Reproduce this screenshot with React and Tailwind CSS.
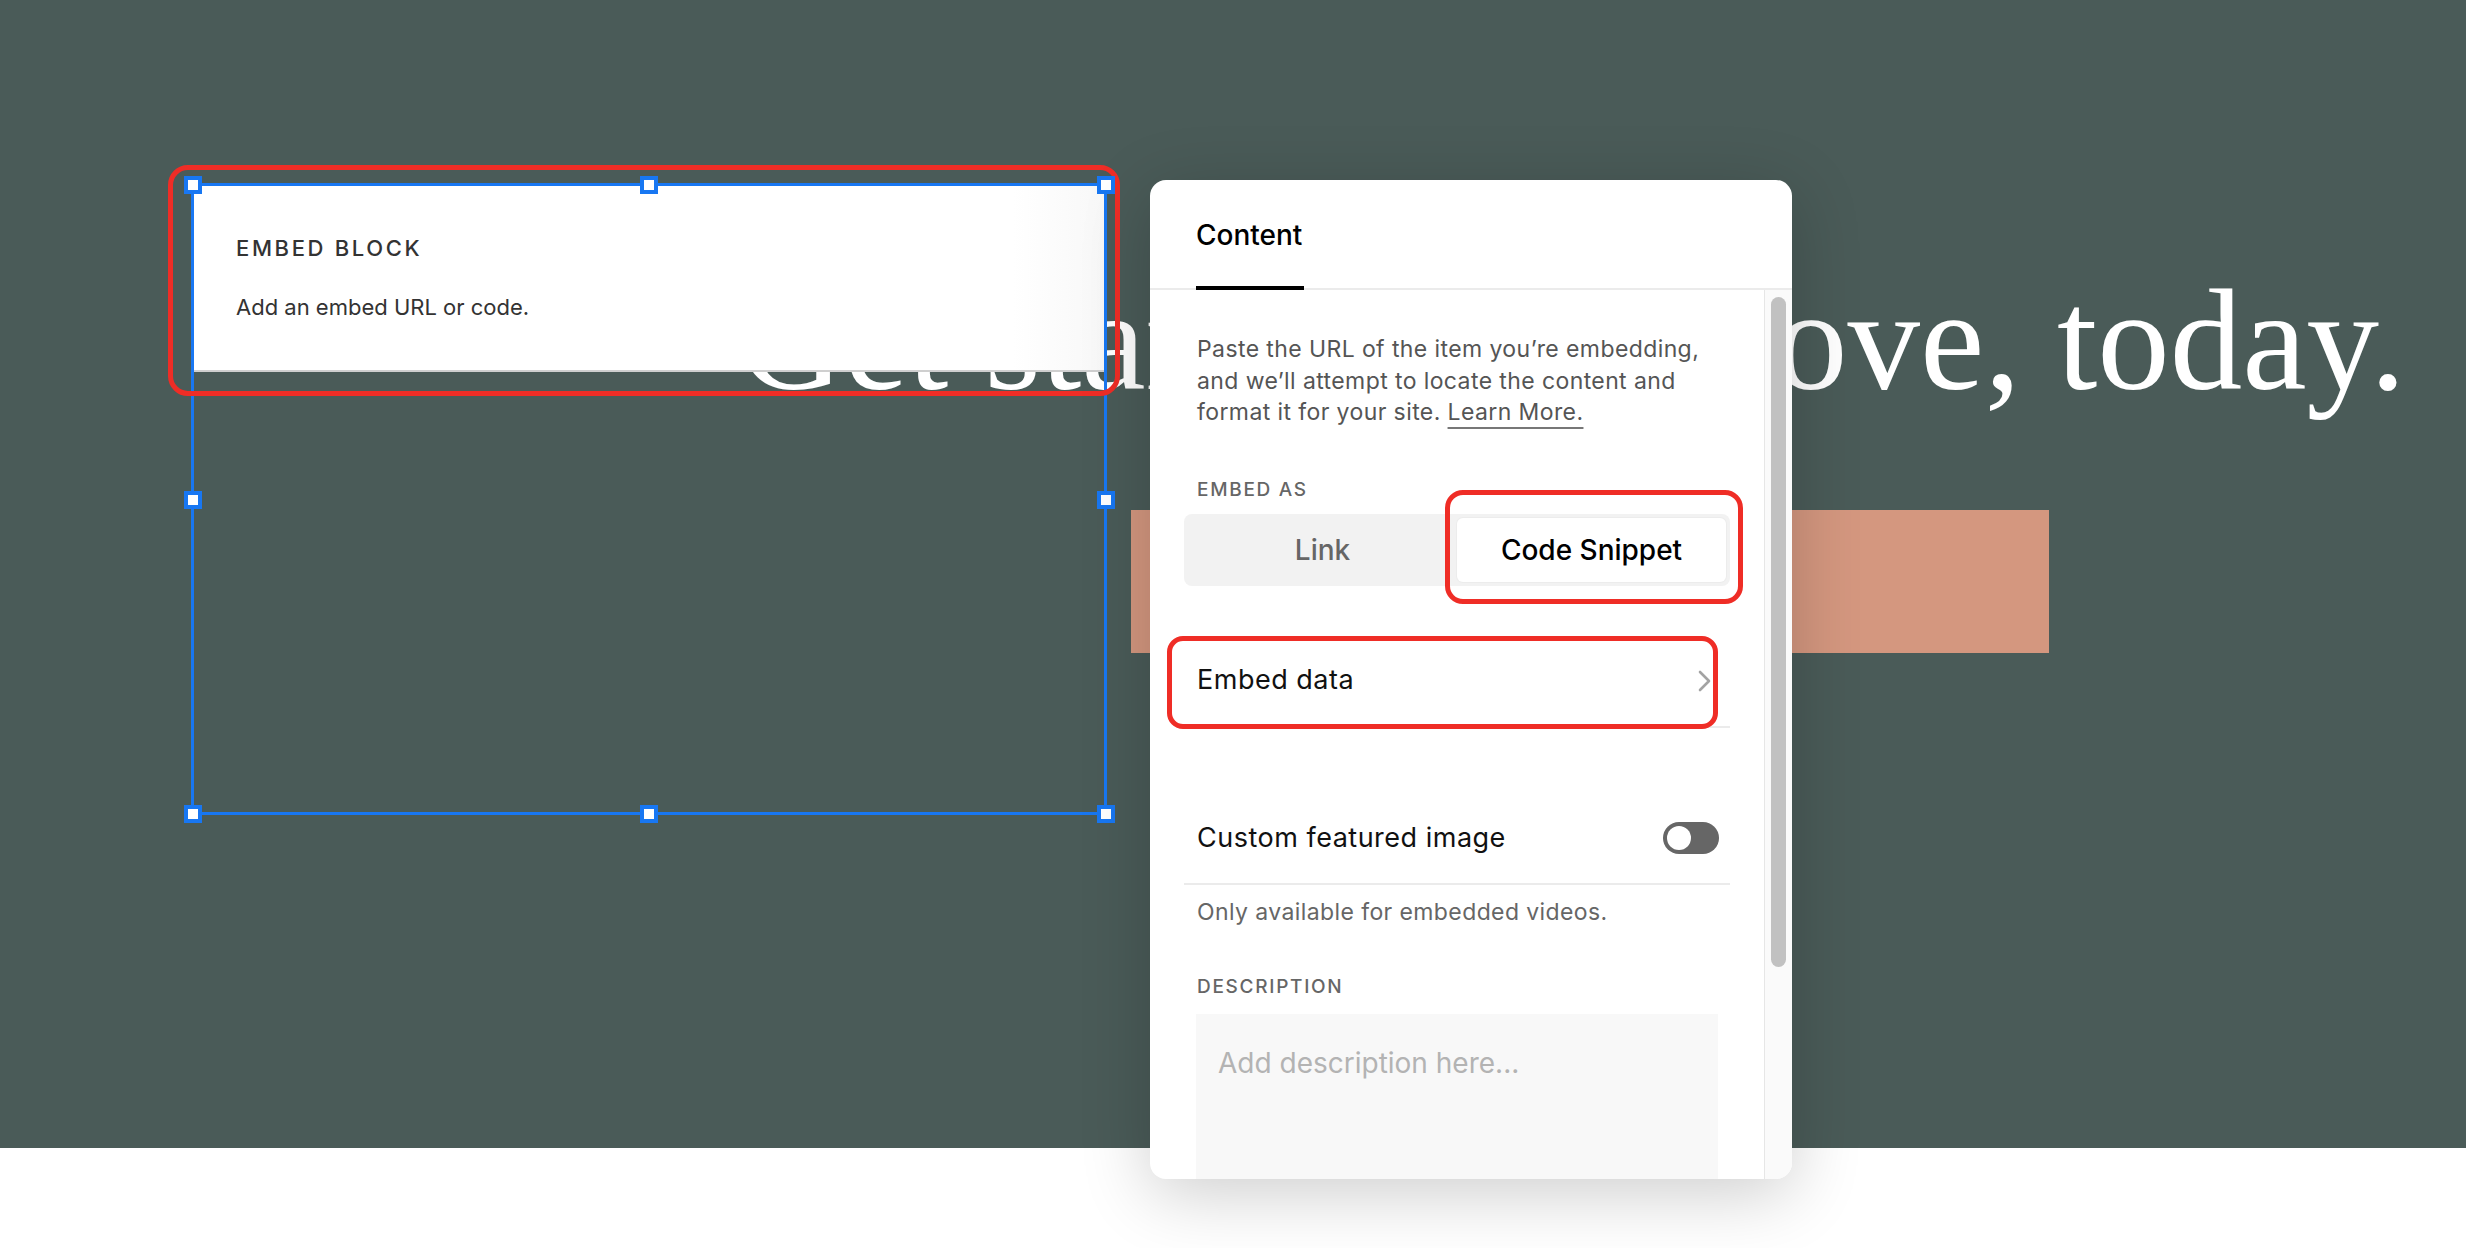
import React from "react";

function Handle({ className }) {
  return (
    <div
      className={
        "absolute w-[18px] h-[18px] -translate-x-1/2 -translate-y-1/2 bg-white border-[4px] border-[#1877f2] " +
        className
      }
    />
  );
}

function Chevron() {
  return (
    <svg width="16" height="22" viewBox="0 0 16 22" fill="none">
      <polyline points="3,2 12,11 3,20" stroke="#a3a3a3" strokeWidth="2.6" strokeLinecap="round" strokeLinejoin="round" />
    </svg>
  );
}

export default function App() {
  return (
    <div className="relative w-[2466px] h-[1248px] overflow-hidden bg-white font-['Inter','Liberation_Sans',sans-serif]">
      {/* page content */}
      <section className="h-[1148px] bg-[#4a5b58] flex flex-col">
        <h1 className="mt-[268px] ml-[739px] whitespace-nowrap font-['Liberation_Serif',serif] text-[145px] leading-[145px] font-normal text-white">
          <span>Get sta</span>
          <span className="tracking-[-26.6px]">rted with a site you </span>
          <span>love, today.</span>
        </h1>
        <div className="mt-[97px] ml-[1131px] w-[918px] h-[143px] bg-[#d4977f]" />
      </section>
      <div className="h-[100px] bg-white" />

      {/* selected embed block */}
      <div className="absolute left-[191px] top-[183px] w-[916px] h-[632px] border-[3px] border-[#1877f2]">
        <div className="relative h-[186px] border-b-2 border-[#cfcfcf] bg-[linear-gradient(to_right,#ffffff_90%,#f8f8f8)] pl-[42px] pt-[48px]">
          <div className="text-[22px] leading-[28px] font-medium tracking-[0.12em] text-[#333]">EMBED BLOCK</div>
          <div className="mt-[31px] text-[22px] leading-[28px] text-[#333]">Add an embed URL or code.</div>
          <div className="absolute left-[-26px] top-[-21px] right-[-16px] bottom-[-26px] rounded-[20px] border-[5px] border-[#ef2d26]" />
        </div>
        <Handle className="left-[-1.5px] top-[-1.5px]" />
        <Handle className="left-[455px] top-[-1.5px]" />
        <Handle className="left-[911.5px] top-[-1.5px]" />
        <Handle className="left-[-1.5px] top-[313.5px]" />
        <Handle className="left-[911.5px] top-[313.5px]" />
        <Handle className="left-[-1.5px] top-[628px]" />
        <Handle className="left-[455px] top-[628px]" />
        <Handle className="left-[911.5px] top-[628px]" />
      </div>

      {/* settings panel */}
      <div className="absolute left-[1150px] top-[180px] w-[642px] h-[999px] rounded-[16px] bg-white overflow-hidden shadow-[0_14px_70px_rgba(0,0,0,0.2)] flex flex-col">
        <div className="h-[110px] shrink-0 border-b-2 border-[#ebebeb] flex items-end pl-[46px]">
          <div className="flex flex-col -mb-[2px]">
            <div className="text-[28px] leading-[36px] font-medium text-black">Content</div>
            <div className="mt-[33px] h-[4px] w-[108px] bg-black" />
          </div>
        </div>
        <div className="flex flex-1 min-h-0">
          <div className="flex-1 flex flex-col pl-[34px] pr-[34px] overflow-hidden">
            <p className="shrink-0 mt-[44px] pl-[13px] text-[23px] leading-[31.5px] tracking-[0.4px] text-[#555]">
              Paste the URL of the item you’re embedding,
              <br />
              and we’ll attempt to locate the content and
              <br />
              format it for your site.{" "}
              <span className="underline decoration-2 underline-offset-[7px] decoration-[#777]">Learn More.</span>
            </p>
            <div className="shrink-0 mt-[49px] pl-[13px] text-[19px] leading-[24px] font-medium tracking-[0.09em] text-[#666]">
              EMBED AS
            </div>
            <div className="shrink-0 mt-[12px] h-[72px] rounded-[8px] bg-[#f2f2f2] p-[4px] flex">
              <div className="flex-1 flex items-center justify-center text-[28px] font-medium text-[#666]">Link</div>
              <div className="relative flex-1 flex items-center justify-center rounded-[6px] bg-white shadow-[0_0_0_1px_#ececec] text-[28px] font-medium text-black">
                Code Snippet
                <div className="absolute left-[-12px] top-[-28px] right-[-17px] bottom-[-22px] rounded-[18px] border-[5px] border-[#ef2d26]" />
              </div>
            </div>
            <div className="relative shrink-0 mt-[50px] h-[92px] border-b-2 border-[#ebebeb] flex items-center justify-between pl-[13px] pr-[17px]">
              <span className="text-[27px] tracking-[0.5px] text-[#111]">Embed data</span>
              <Chevron />
              <div className="absolute left-[-17px] top-0 right-[12px] bottom-[-3px] rounded-[16px] border-[5px] border-[#ef2d26]" />
            </div>
            <div className="shrink-0 mt-[66px] h-[91px] border-b-2 border-[#ebebeb] flex items-center justify-between pl-[13px] pr-[11px]">
              <span className="text-[27px] tracking-[0.5px] text-[#111]">Custom featured image</span>
              <div className="w-[56px] h-[32px] rounded-full bg-[#666] flex items-center pl-[4px]">
                <div className="w-[24px] h-[24px] rounded-full bg-white" />
              </div>
            </div>
            <div className="shrink-0 mt-[11px] pl-[13px] text-[23px] leading-[32px] tracking-[0.4px] text-[#666]">
              Only available for embedded videos.
            </div>
            <div className="shrink-0 mt-[47px] pl-[13px] text-[19px] leading-[24px] font-medium tracking-[0.09em] text-[#666]">
              DESCRIPTION
            </div>
            <div className="shrink-0 mt-[15px] mx-[12px] h-[240px] bg-[#f8f8f8] pt-[31px] pl-[22px] text-[28px] leading-[36px] text-[#b3b3b3]">
              Add description here...
            </div>
          </div>
          <div className="w-[28px] shrink-0 border-l border-[#e6e6e6] bg-[#fafafa] pt-[7px] pl-[6px]">
            <div className="w-[15px] h-[670px] rounded-full bg-[#c1c1c1]" />
          </div>
        </div>
      </div>
    </div>
  );
}
